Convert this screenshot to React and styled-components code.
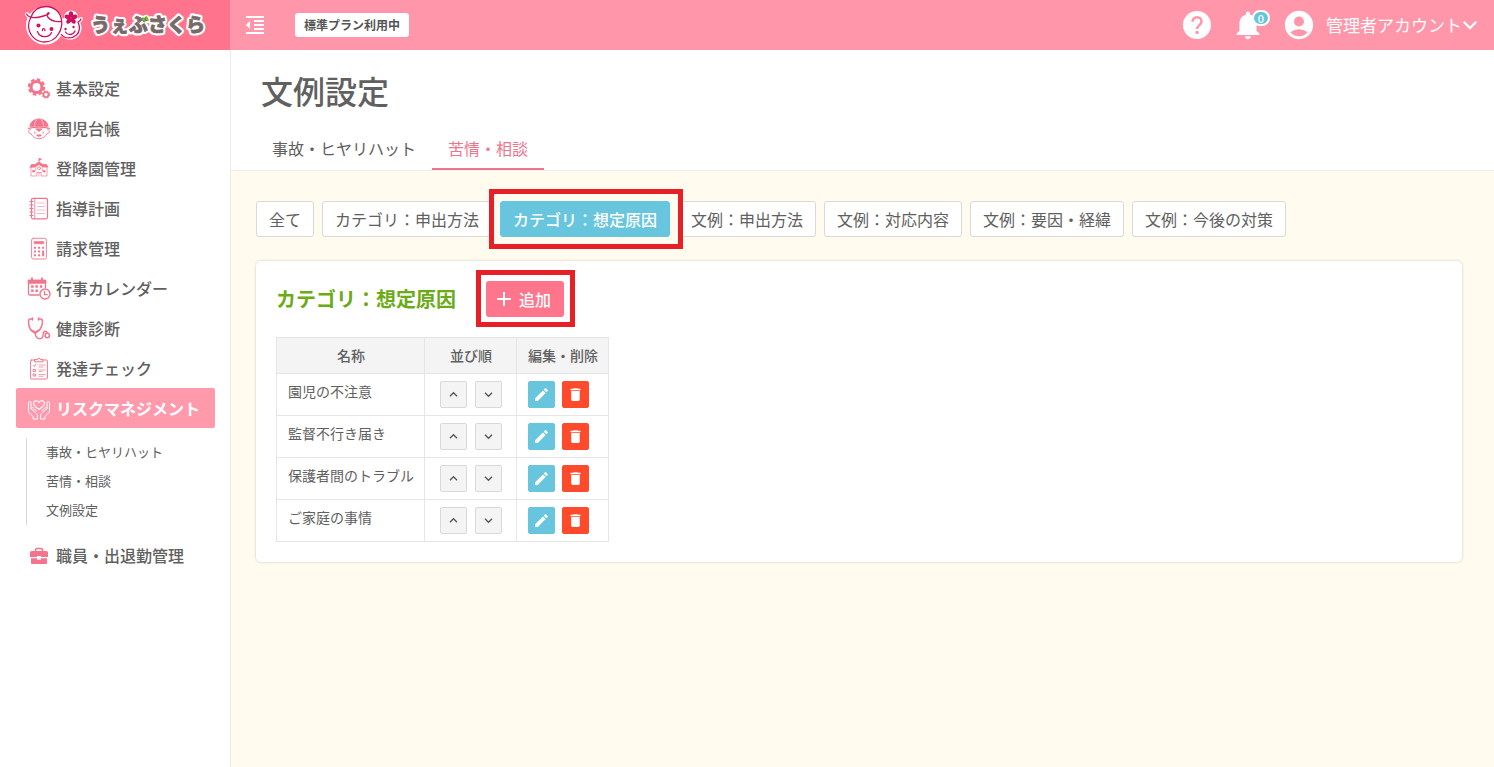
import React, { useState } from 'react';
import styled, { createGlobalStyle, css } from 'styled-components';
import {
  MdFormatIndentDecrease,
  MdNotifications,
  MdAccountCircle,
  MdAdd,
  MdEdit,
  MdDelete,
} from 'react-icons/md';

const GlobalStyle = createGlobalStyle`
  * {
    box-sizing: border-box;
  }
  body {
    margin: 0;
    background: #fffbee;
    color: #606060;
    font-family: "Noto Sans CJK JP", "Noto Sans", sans-serif;
    font-size: 16px;
    line-height: 24px;
  }
  button {
    font: inherit;
    color: inherit;
    cursor: pointer;
  }
  a {
    color: inherit;
    text-decoration: none;
  }
  h1, h2, ul {
    margin: 0;
    padding: 0;
  }
  ul {
    list-style: none;
  }
  svg {
    display: block;
    flex-shrink: 0;
  }
`;

const Page = styled.div`
  min-height: 100vh;
  display: flex;
  flex-direction: column;
`;

const Header = styled.header`
  display: flex;
  align-items: center;
  height: 50px;
  background: #ff96a9;
  color: white;
`;

const Brand = styled.a`
  width: 230px;
  height: 50px;
  background: #ff748c;
`;

const IconButton = styled.button`
  position: relative;
  display: flex;
  padding: 0;
  border: none;
  background: none;
  color: white;
`;

const HeaderLeft = styled.div`
  display: flex;
  align-items: center;
  gap: 28px;
  padding-left: 13px;
`;

const Plan = styled.span`
  padding: 0 9px;
  border-radius: 3px;
  background: white;
  color: #555;
  font-size: 12px;
  font-weight: bold;
  line-height: 24px;
`;

const HeaderRight = styled.div`
  display: flex;
  align-items: center;
  gap: 17px;
  margin-left: auto;
  padding-right: 16px;
`;

const Count = styled.span`
  position: absolute;
  top: 2px;
  left: 21px;
  width: 18px;
  height: 16px;
  border: 2px solid white;
  border-radius: 8px;
  background: #67c5de;
  font-size: 11px;
  font-weight: 500;
  line-height: 12px;
  text-align: center;
`;

const Account = styled.button`
  display: flex;
  align-items: center;
  gap: 10px;
  padding: 0;
  border: none;
  background: none;
  color: white;
  font-size: 17px;
`;

const AccountName = styled.span`
  display: flex;
  align-items: center;
`;

const Body = styled.div`
  flex: 1;
  display: flex;
`;

const Sidebar = styled.nav`
  flex-shrink: 0;
  width: 231px;
  padding: 18px 15px 18px 16px;
  border-right: 1px solid #ececec;
  background: white;
`;

const MenuLink = styled.a`
  display: flex;
  align-items: center;
  gap: 5px;
  height: 40px;
  padding-left: 11px;
  border-radius: 2px;
  font-weight: 500;
  svg {
    margin-top: 2px;
    color: #f4758b;
  }
  ${(props) => props.$active && css`
    background: #ff9aad;
    color: white;
    font-weight: bold;
    svg {
      color: white;
    }
  `}
`;

const SubMenu = styled.ul`
  margin: 10px 0 10px 10px;
  padding-left: 19px;
  border-left: 1px solid #d8d8d8;
`;

const SubLink = styled.a`
  display: block;
  padding-bottom: 2px;
  font-size: 13px;
  line-height: 27px;
`;

const Main = styled.main`
  flex: 1;
  min-width: 0;
`;

const PageHead = styled.div`
  padding: 16px 25px 0;
  border-bottom: 1px solid #ececec;
  background: white;
`;

const Title = styled.h1`
  padding-left: 5px;
  font-size: 32px;
  font-weight: 500;
  line-height: 48px;
`;

const Tabs = styled.div`
  display: flex;
  margin-top: 14px;
`;

const Tab = styled.button`
  height: 42px;
  padding: 0 16px;
  border: none;
  border-bottom: 2px solid ${(props) => (props.$active ? '#f0758b' : 'transparent')};
  background: none;
  color: ${(props) => (props.$active ? '#f0758b' : '#606060')};
`;

const Content = styled.div`
  padding: 30px 32px 30px 25px;
`;

const Filters = styled.div`
  display: flex;
  flex-wrap: wrap;
  gap: 8px;
`;

const Filter = styled.button`
  height: 36px;
  padding: 0 12px;
  border: 1px solid #d9d9d9;
  border-radius: 3px;
  background: white;
  ${(props) => props.$active && css`
    border-color: #67c5de;
    background: #67c5de;
    color: white;
    font-weight: 500;
  `}
`;

const Marked = styled.div`
  position: relative;
`;

// red frame laid over the control it points at
const Frame = styled.span`
  position: absolute;
  z-index: 1;
  inset: ${(props) => props.$inset};
  border: 5px solid #e71f27;
  pointer-events: none;
`;

const Card = styled.section`
  margin-top: 24px;
  padding: 20px;
  border-radius: 5px;
  background: white;
  box-shadow: 0 0 3px rgba(0, 0, 0, 0.2);
`;

const CardHead = styled.div`
  display: flex;
  align-items: center;
  gap: 30px;
  margin-bottom: 20px;
`;

const CardTitle = styled.h2`
  color: #6aab16;
  font-size: 20px;
  font-weight: bold;
  line-height: 36px;
`;

const AddButton = styled.button`
  display: flex;
  align-items: center;
  gap: 3px;
  height: 36px;
  padding: 0 13px 0 6px;
  border: none;
  border-radius: 3px;
  background: #ff758c;
  color: white;
  font-weight: 500;
`;

const Table = styled.table`
  border-collapse: collapse;
  font-size: 14px;
  line-height: 20px;
  th, td {
    border: 1px solid #e5e5e5;
  }
  th {
    padding: 8px 10px 8px 11px;
    background: #f4f4f4;
    font-weight: 500;
    line-height: 19px;
  }
  td {
    padding: 7px 10px 7px 11px;
    vertical-align: top;
  }
`;

const Actions = styled.div`
  display: flex;
  justify-content: ${(props) => (props.$center ? 'center' : 'flex-start')};
  gap: ${(props) => (props.$center ? 8 : 7)}px;
  min-width: 70px;
`;

const SmallButton = styled.button`
  display: flex;
  align-items: center;
  justify-content: center;
  width: 27px;
  height: 27px;
  padding: 0;
  border: 1px solid ${(props) => props.$border || props.$bg};
  border-radius: 2px;
  background: ${(props) => props.$bg};
  color: ${(props) => props.$color || 'white'};
`;

const Logo = () => (
  <svg width="230" height="50" viewBox="0 0 230 50">
    <g fill="white" stroke="white" strokeWidth="4" strokeLinejoin="round">
      <circle cx="45" cy="25.500" r="17" />
      <circle cx="70" cy="28" r="9.500" />
      <circle cx="71" cy="17.500" r="5" />
      <path d="M27 14l3 4M79.500 20.500l1.500-1.500" strokeLinecap="round" />
    </g>
    <g fill="none" stroke="#cf1260" strokeWidth="1.300" strokeLinecap="round" strokeLinejoin="round">
      <path d="M26.500 14c2 3.500 8 4 13 3 6-1.200 10-3 9.500-4-1-1.200-3 1.500-1.200 4 2.800 3.500 7.700 5.200 13.700 4.500" />
      <path d="M31 17C33.500 10 39 6.500 46 6.500c8 0 14.500 5.500 15.500 13.500.8 5-.5 10-3 14-3.500 5.500-8.500 8-14 8-9 0-15.500-7-16-16 0-3 .8-6 2.500-9" />
      <path d="M37.500 31.500c2 6.500 11.500 7 14 1" />
      <path d="M42.500 30.500c-.5-2.500 2.500-2.500 2.500 0M65.500 32c2 3.500 7.500 3.500 9.500-1" />
      <path d="M61.500 34.500c3 4.500 10.500 4.500 15 .5 3.500-3.500 3.500-8.500 1.500-13 1.500-.5 2.500-1.500 3-3" />
    </g>
    <g fill="#cf1260">
      <circle cx="38.500" cy="25.500" r="2" />
      <circle cx="51.500" cy="29" r="2" />
      <circle cx="65.500" cy="29" r="1.200" />
      <circle cx="73.500" cy="27" r="1.200" />
      <ellipse cx="71" cy="14.500" rx="2.200" ry="3.200" />
      <ellipse cx="71" cy="14.500" rx="2.200" ry="3.200" transform="rotate(72 71 18)" />
      <ellipse cx="71" cy="14.500" rx="2.200" ry="3.200" transform="rotate(144 71 18)" />
      <ellipse cx="71" cy="14.500" rx="2.200" ry="3.200" transform="rotate(216 71 18)" />
      <ellipse cx="71" cy="14.500" rx="2.200" ry="3.200" transform="rotate(288 71 18)" />
    </g>
    <g fontSize="19" fontWeight="900" strokeLinejoin="round">
      <text x="91" y="32" fill="white" stroke="white" strokeWidth="5" aria-hidden="true">
        うぇぶさくら
      </text>
      <text x="91" y="32" fill="#77696a" stroke="#77696a" strokeWidth=".7">
        うぇぶさくら
      </text>
    </g>
    <path d="M143 18.500l1.300 2.700M146.300 17.300l1.300 2.700" stroke="#74b72b" strokeWidth="2.300" strokeLinecap="round" />
  </svg>
);

const HelpIcon = () => (
  <svg width="34" height="34" viewBox="0 0 34 34" fill="none">
    <circle cx="17" cy="17" r="14" fill="white" />
    <path
      d="M12.600 13.700c0-2.800 2-4.500 4.500-4.500s4.400 1.700 4.400 4.200c0 3.600-4.400 3.800-4.400 7.700"
      stroke="#ff96a9"
      strokeWidth="2.500"
    />
    <circle cx="17.100" cy="24.500" r="1.700" fill="#ff96a9" />
  </svg>
);

const MenuIcon = ({ children }) => (
  <svg
    width="24"
    height="24"
    viewBox="0 0 24 24"
    fill="none"
    stroke="currentColor"
    strokeWidth="1.3"
    strokeLinecap="round"
    strokeLinejoin="round"
  >
    {children}
  </svg>
);

const GearsIcon = () => (
  <MenuIcon>
    <circle cx="9.500" cy="10" r="5.500" strokeWidth="3.200" />
    <circle cx="9.500" cy="10" r="7.600" strokeWidth="2.200" strokeLinecap="butt" strokeDasharray="3.600 2.368" />
    <circle cx="19" cy="17.500" r="2.500" strokeWidth="1.700" />
    <circle cx="19" cy="17.500" r="3.500" strokeWidth="1.200" strokeLinecap="butt" strokeDasharray="1.600 1.149" />
  </MenuIcon>
);

const KidIcon = () => (
  <MenuIcon>
    <path d="M2.500 9.800C2.800 5 6.500 2 12 1.500c5.500.5 9.200 3.500 9.500 8.300z" fill="currentColor" stroke="none" />
    <path d="M9.800 2.500C8 4.500 7.500 7 7.500 9.500M14.200 2.500C16 4.500 16.500 7 16.500 9.500" stroke="white" strokeWidth=".5" />
    <path d="M1.500 11.300c6-1.400 15-1.400 21 0" strokeWidth="1.200" />
    <path d="M3.300 12.300c-2.400.2-2.400 4.200.6 4.400 1.500 3 4.600 5 8.100 5s6.600-2 8.100-5c3-.2 3-4.200.6-4.400" strokeWidth=".9" />
    <path d="M9 12l3 2.500 3-2.500z" fill="currentColor" strokeWidth=".8" />
    <path d="M7.800 15v1M16.200 15v1M9.800 18c1.300 1.300 3.100 1.300 4.400 0z" strokeWidth="1.100" />
  </MenuIcon>
);

const SchoolIcon = () => (
  <MenuIcon>
    <path d="M12 5.500V1.300l2.500 1-2.500 1" fill="currentColor" strokeWidth=".9" />
    <path d="M3 10l1.500-2.500H8L12 5l4 2.500h3.500L21 10h-5l-4-2.500L8 10z" fill="currentColor" strokeWidth=".8" />
    <path d="M4 10.500v8.500h5.800v-3.500h4.400V19H20v-8.500" strokeWidth=".7" />
    <path d="M6 13.500h1.500V15H6zM16.500 13.500H18V15h-1.500z" fill="currentColor" strokeWidth=".8" />
    <circle cx="12" cy="11.300" r="1.500" strokeWidth=".8" />
    <path d="M12 15.500V19M8.700 10.500v3.500M15.300 10.500v3.500" strokeWidth=".6" />
  </MenuIcon>
);

const NotebookIcon = () => (
  <MenuIcon>
    <rect x="4.500" y="1.300" width="16" height="20.500" rx="1.500" strokeWidth="1.200" />
    <path d="M7.800 1.500v20" strokeWidth=".8" />
    <path d="M3 4.500h3M3 8h3M3 11.500h3M3 15h3M3 18.500h3" strokeWidth="1.200" />
    <path d="M10.500 6h7M10.500 9.500h7M10.500 13h7M10.500 16.500h7" strokeWidth=".5" />
  </MenuIcon>
);

const CalculatorIcon = () => (
  <MenuIcon>
    <rect x="4.600" y="1.300" width="14.800" height="20.700" rx="1.800" strokeWidth=".9" />
    <path d="M7.300 4.500h9.400v2.300H7.300z" fill="currentColor" strokeWidth=".6" />
    <path d="M7.900 10.800h.1M12 10.800h.1M16.100 10.800h.1M7.900 14.500h.1M12 14.500h.1M7.900 18.200h.1M12 18.200h.1M16.100 14.500v3.700" strokeWidth="1.900" strokeLinecap="square" />
  </MenuIcon>
);

const CalendarIcon = () => (
  <MenuIcon>
    <path d="M12 18H3a1.500 1.500 0 0 1-1.500-1.500v-13h17v7" />
    <path d="M1.500 3.500h17v2.500h-17z" fill="currentColor" />
    <path d="M5 1.200v3M15 1.200v3" strokeWidth="1.800" />
    <path d="M5.300 9.500h.1M9.600 9.500h.1M14 9.500h.1M5.300 13.800h.1M9.600 13.800h.1" strokeWidth="2.400" strokeLinecap="square" />
    <circle cx="18" cy="17" r="5" fill="white" strokeWidth="1.400" />
    <path d="M17.500 14.500v3.200h2.700" />
  </MenuIcon>
);

const StethoscopeIcon = () => (
  <MenuIcon>
    <path d="M5 2H3.500C2 2 1.500 3 1.500 4.500c0 6 2.500 10.500 6.500 10.500s7.500-4.500 7.500-10.500C15.500 3 15 2 13.500 2H12" strokeWidth="1.500" />
    <path d="M5.500 1v2M11.500 1v2M6 13.500l1 2.200h2.500l1-2.200" strokeWidth="1.500" />
    <path d="M8 16c.5 4 2.500 5.800 5 5.800 5 0 1.500-7.500 5-7.500 1.500 0 2 1 2.200 1.800" strokeWidth="1.400" />
    <circle cx="20.300" cy="18.500" r="2.200" strokeWidth="1.500" />
  </MenuIcon>
);

const ClipboardIcon = () => (
  <MenuIcon>
    <rect x="3.600" y="3" width="16.800" height="19" rx="1" strokeWidth="1" />
    <path d="M8 4.800h8V2.600h-2.500a1.500 1.500 0 0 0-3 0H8z" strokeWidth="1" fill="white" />
    <path d="M6.500 8.500l1 1L9 7M6.500 12.500h2v2h-2zM6.500 17h2v2h-2z" strokeWidth=".9" />
    <path d="M12 8h6M12 10h4M12 13h6M12 14.500h3M12 17.500h6M12 19.300h4" strokeWidth=".7" />
  </MenuIcon>
);

const CareIcon = () => (
  <MenuIcon>
    <path d="M12 12.500C9 10.500 6.500 8.800 6.500 6.300 6.500 3.500 10.500 2.800 12 5.500c1.500-2.700 5.500-2 5.500.8 0 2.500-2.500 4.200-5.500 6.200z" strokeWidth="1.100" />
    <path d="M1.500 5.500c0-1.500 2.500-1.500 2.500 0v6l4.500 4c1.500 1.300 2 2.500 2 4.500v2H6v-2.500l-4-4c-.5-.5-.5-1-.5-1.500zM4 11.500c.8-1.500 2.300-1 3 0l2 2.500" strokeWidth="1" />
    <path d="M22.500 5.500c0-1.500-2.500-1.500-2.500 0v6l-4.500 4c-1.500 1.300-2 2.500-2 4.500v2H18v-2.500l4-4c.5-.5.5-1 .5-1.500zM20 11.500c-.8-1.500-2.300-1-3 0L15 14" strokeWidth="1" />
  </MenuIcon>
);

const BriefcaseIcon = () => (
  <MenuIcon>
    <path d="M8.500 7.500V6a1.500 1.500 0 0 1 1.500-1.500h4A1.500 1.500 0 0 1 15.500 6v1.500" strokeWidth="1.600" />
    <path d="M4.500 7h15A1.500 1.500 0 0 1 21 8.500V13h-7v-1h-4v1H3V8.500A1.500 1.500 0 0 1 4.500 7zM4 14.200h6v1.500h4v-1.500h6V19a1 1 0 0 1-1 1H5a1 1 0 0 1-1-1z" fill="currentColor" stroke="none" />
  </MenuIcon>
);

const Chevron = ({ up, size }) => (
  <svg width={size} height={size} viewBox="0 0 14 14" fill="none" stroke="currentColor" strokeWidth="2">
    <path d={up ? 'M1.500 9.800L7 4.300l5.500 5.500' : 'M1.500 4.200L7 9.700l5.500-5.500'} />
  </svg>
);

const menu = [
  { label: '基本設定', Icon: GearsIcon },
  { label: '園児台帳', Icon: KidIcon },
  { label: '登降園管理', Icon: SchoolIcon },
  { label: '指導計画', Icon: NotebookIcon },
  { label: '請求管理', Icon: CalculatorIcon },
  { label: '行事カレンダー', Icon: CalendarIcon },
  { label: '健康診断', Icon: StethoscopeIcon },
  { label: '発達チェック', Icon: ClipboardIcon },
  {
    label: 'リスクマネジメント',
    Icon: CareIcon,
    active: true,
    children: ['事故・ヒヤリハット', '苦情・相談', '文例設定'],
  },
  { label: '職員・出退勤管理', Icon: BriefcaseIcon },
];

const tabs = ['事故・ヒヤリハット', '苦情・相談'];

const filters = [
  '全て',
  'カテゴリ：申出方法',
  'カテゴリ：想定原因',
  '文例：申出方法',
  '文例：対応内容',
  '文例：要因・経緯',
  '文例：今後の対策',
];

const initialRows = ['園児の不注意', '監督不行き届き', '保護者間のトラブル', 'ご家庭の事情'];

export default function App() {
  const [tab, setTab] = useState('苦情・相談');
  const [filter, setFilter] = useState('カテゴリ：想定原因');
  const [rows, setRows] = useState(initialRows);

  const move = (index, step) => {
    const target = index + step;
    if (target < 0 || target >= rows.length) return;
    const next = [...rows];
    next[index] = rows[target];
    next[target] = rows[index];
    setRows(next);
  };

  const remove = (name) => {
    setRows(rows.filter((row) => row !== name));
  };

  return (
    <Page>
      <GlobalStyle />
      <Header>
        <Brand href="#" aria-label="うぇぶさくら">
          <Logo />
        </Brand>
        <HeaderLeft>
          <IconButton aria-label="メニューを閉じる">
            <MdFormatIndentDecrease size={24} />
          </IconButton>
          <Plan>標準プラン利用中</Plan>
        </HeaderLeft>
        <HeaderRight>
          <IconButton aria-label="ヘルプ">
            <HelpIcon />
          </IconButton>
          <IconButton aria-label="お知らせ">
            <MdNotifications size={34} />
            <Count>0</Count>
          </IconButton>
          <Account>
            <MdAccountCircle size={34} />
            <AccountName>
              管理者アカウント
              <Chevron size={16} />
            </AccountName>
          </Account>
        </HeaderRight>
      </Header>
      <Body>
        <Sidebar>
          <ul>
            {menu.map(({ label, Icon, active, children }) => (
              <li key={label}>
                <MenuLink href="#" $active={active}>
                  <Icon />
                  {label}
                </MenuLink>
                {children && (
                  <SubMenu>
                    {children.map((child) => (
                      <li key={child}>
                        <SubLink href="#">{child}</SubLink>
                      </li>
                    ))}
                  </SubMenu>
                )}
              </li>
            ))}
          </ul>
        </Sidebar>
        <Main>
          <PageHead>
            <Title>文例設定</Title>
            <Tabs>
              {tabs.map((name) => (
                <Tab key={name} $active={name === tab} onClick={() => setTab(name)}>
                  {name}
                </Tab>
              ))}
            </Tabs>
          </PageHead>
          <Content>
            <Filters>
              {filters.map((name) => (
                <Marked key={name}>
                  <Filter $active={name === filter} onClick={() => setFilter(name)}>
                    {name}
                  </Filter>
                  {name === 'カテゴリ：想定原因' && <Frame $inset="-12px -13px -12px -11px" />}
                </Marked>
              ))}
            </Filters>
            <Card>
              <CardHead>
                <CardTitle>{filter}</CardTitle>
                <Marked>
                  <AddButton>
                    <MdAdd size={24} />
                    追加
                  </AddButton>
                  <Frame $inset="-11px -11px -10px -10px" />
                </Marked>
              </CardHead>
              <Table>
                <thead>
                  <tr>
                    <th>名称</th>
                    <th>並び順</th>
                    <th>編集・削除</th>
                  </tr>
                </thead>
                <tbody>
                  {rows.map((name, index) => (
                    <tr key={name}>
                      <td>{name}</td>
                      <td>
                        <Actions $center>
                          <SmallButton $bg="#f4f4f4" $border="#d9d9d9" $color="#555" aria-label="上へ" onClick={() => move(index, -1)}>
                            <Chevron up size={9} />
                          </SmallButton>
                          <SmallButton $bg="#f4f4f4" $border="#d9d9d9" $color="#555" aria-label="下へ" onClick={() => move(index, 1)}>
                            <Chevron size={9} />
                          </SmallButton>
                        </Actions>
                      </td>
                      <td>
                        <Actions>
                          <SmallButton $bg="#67c5de" aria-label="編集">
                            <MdEdit size={17} />
                          </SmallButton>
                          <SmallButton $bg="#ff4b2b" aria-label="削除" onClick={() => remove(name)}>
                            <MdDelete size={17} />
                          </SmallButton>
                        </Actions>
                      </td>
                    </tr>
                  ))}
                </tbody>
              </Table>
            </Card>
          </Content>
        </Main>
      </Body>
    </Page>
  );
}
